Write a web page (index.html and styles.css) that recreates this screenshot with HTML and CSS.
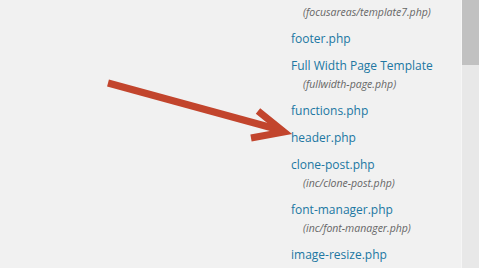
FILE: index.html
```html
<!DOCTYPE html>
<html lang="en">
<head>
    <meta charset="UTF-8">
    <meta name="viewport" content="width=device-width, initial-scale=1.0">
    <title>Theme Files</title>
    <link rel="stylesheet" href="styles.css">
</head>
<body>
    <div id="page">
        <div id="file-list-wrap">
            <ul id="file-list">
                <li class="partial"><a href="#">Focus Areas Page Template</a><span class="file-path">(focusareas/template7.php)</span></li>
                <li><a href="#">footer.php</a></li>
                <li><a href="#">Full Width Page Template</a><span class="file-path">(fullwidth-page.php)</span></li>
                <li><a href="#">functions.php</a></li>
                <li><a href="#">header.php</a></li>
                <li><a href="#">clone-post.php</a><span class="file-path">(inc/clone-post.php)</span></li>
                <li><a href="#">font-manager.php</a><span class="file-path">(inc/font-manager.php)</span></li>
                <li><a href="#">image-resize.php</a></li>
            </ul>
        </div>
        <div class="scrollbar">
            <div class="scrollbar-thumb"></div>
        </div>
    </div>

    <!-- red arrow pointing at header.php -->
    <svg class="arrow" width="479" height="268" viewBox="0 0 479 268">
        <line x1="108" y1="83" x2="280" y2="130" stroke="#c2452d" stroke-width="7" />
        <polyline points="258,111 284,132 251,138" fill="none" stroke="#c2452d" stroke-width="7" stroke-linejoin="miter" />
    </svg>
</body>
</html>
```

FILE: styles.css
```css
body {
    margin: 0;
    padding: 0;
    background: #f1f1f1;
    font-family: 'Open Sans', 'Noto Sans', sans-serif;
    overflow: hidden;
}

#page {
    display: flex;
    height: 268px;
}

#file-list-wrap {
    flex: 1;
    overflow: hidden;
    border-right: 1px solid #f6f6f6;
}

#file-list {
    list-style: none;
    margin: -15px 0 0 0;
    padding: 0 0 0 291px;
}

#file-list li {
    margin-bottom: 9px;
}

#file-list a {
    display: block;
    font-size: 12px;
    line-height: 18px;
    color: #2077a2;
    text-decoration: none;
    white-space: nowrap;
}

/* only the tail of this entry shows above the fold */
#file-list li.partial a {
    transform: translateY(-5px);
}

.file-path {
    display: block;
    padding-left: 12px;
    font-size: 10.5px;
    line-height: 18px;
    font-style: italic;
    color: #666;
    white-space: nowrap;
}

.scrollbar {
    width: 17px;
    background: #e8e8e8;
}

.scrollbar-thumb {
    height: 65px;
    background: #c1c1c1;
}

.arrow {
    position: absolute;
    top: 0;
    left: 0;
    pointer-events: none;
}
```
